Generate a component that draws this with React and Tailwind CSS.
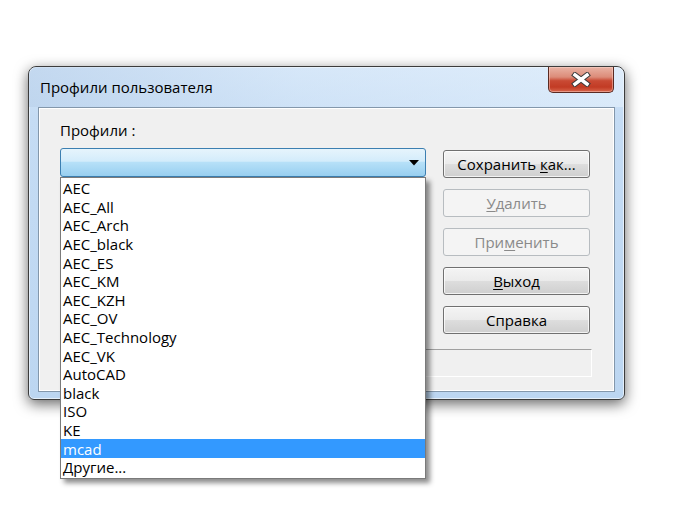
import React from "react";

const items = [
  "AEC",
  "AEC_All",
  "AEC_Arch",
  "AEC_black",
  "AEC_ES",
  "AEC_KM",
  "AEC_KZH",
  "AEC_OV",
  "AEC_Technology",
  "AEC_VK",
  "AutoCAD",
  "black",
  "ISO",
  "KE",
  "mcad",
  "Другие...",
];

function CloseButton() {
  return (
    <div className="flex h-[26px] w-[66px] items-center justify-center rounded-b-[5px] border border-t-0 border-[#5a2a22] bg-[linear-gradient(180deg,#e9b3a5_0%,#dc8c79_40%,#c94a34_55%,#c23b24_80%,#d8664c_100%)] shadow-[inset_0_0_0_1px_rgba(255,220,210,0.45)]">
      <svg width="22" height="15" viewBox="0 0 22 15">
        <path d="M5 3 L17 12 M17 3 L5 12" stroke="#3a3a3a" strokeWidth="5.5" strokeLinecap="square" fill="none" />
        <path d="M5 3 L17 12 M17 3 L5 12" stroke="#ffffff" strokeWidth="3.5" strokeLinecap="square" fill="none" />
      </svg>
    </div>
  );
}

function Btn({ children, disabled }) {
  return (
    <div
      className={
        disabled
          ? "flex h-[28px] w-[147px] items-center justify-center rounded-[3px] border border-[#b7bcc0] bg-[#f4f4f4] text-[15px] text-[#8a8a8a]"
          : "flex h-[28px] w-[147px] items-center justify-center rounded-[3px] border border-[#707070] bg-[linear-gradient(180deg,#f4f4f4_0%,#ebebeb_48%,#dddddd_52%,#cfcfcf_100%)] text-[15px] text-black shadow-[inset_0_0_0_1px_rgba(255,255,255,0.75)]"
      }
    >
      {children}
    </div>
  );
}

export default function App() {
  return (
    <div className="h-[518px] w-[685px] bg-white pl-[28px] pt-[66px] font-['Open_Sans',sans-serif]">
      <div className="relative flex h-[334px] w-[597px] flex-col rounded-b-[6px] rounded-t-[8px] border border-[#3c3c3c] bg-[linear-gradient(180deg,#d3e5f8_0%,#c5dcf4_15%,#bcd6f1_100%)] shadow-[0_4px_14px_rgba(0,0,0,0.6),inset_0_0_0_1px_rgba(255,255,255,0.6)]">
        <div className="flex h-[40px] items-start justify-between rounded-t-[8px] bg-[linear-gradient(90deg,rgba(185,208,234,0.6)_0%,rgba(220,235,250,0.35)_45%,rgba(232,243,253,0.55)_100%)] pl-[11px] pr-[10px]">
          <span className="mt-[9px] text-[15px] leading-[22px] text-black">Профили пользователя</span>
          <CloseButton />
        </div>
        <div className="mx-[9px] mb-[7px] flex-1 border border-[#8397ab] bg-[#f0f0f0] pl-[21px] pr-[22px] pt-[12px] shadow-[inset_0_0_0_1px_#ffffff]">
          <div className="text-[15px] leading-[20px] text-black">Профили :</div>
          <div className="mt-[8px] flex items-start">
            <div className="relative w-[366px]">
              <div className="flex h-[29px] items-center justify-end rounded-[3px] border border-[#3c7fb1] bg-[linear-gradient(180deg,#e6f4fc_0%,#d3ecfb_45%,#b6e0f8_50%,#98cff0_100%)] pr-[6px]">
                <svg width="10" height="6" viewBox="0 0 10 6">
                  <path d="M0 0 H10 L5 5.5 Z" fill="#000" />
                </svg>
              </div>
              <div className="absolute left-0 top-full z-10 w-[366px] border border-[#7a7a7a] bg-white py-px shadow-[4px_4px_5px_rgba(0,0,0,0.45)]">
                {items.map((it) => (
                  <div
                    key={it}
                    className={
                      it === "mcad"
                        ? "flex h-[18.6px] items-center bg-[#3399ff] pl-[2px] text-[15px] leading-[18px] text-white"
                        : "flex h-[18.6px] items-center pl-[2px] text-[15px] leading-[18px] text-black"
                    }
                  >
                    {it}
                  </div>
                ))}
              </div>
            </div>
            <div className="ml-[17px] mt-[2px] flex flex-col gap-[11px]">
              <Btn>
                <span>
                  Сохранить <span className="underline underline-offset-2">к</span>ак...
                </span>
              </Btn>
              <Btn disabled>
                <span>
                  <span className="underline underline-offset-2">У</span>далить
                </span>
              </Btn>
              <Btn disabled>
                <span>
                  При<span className="underline underline-offset-2">м</span>енить
                </span>
              </Btn>
              <Btn>
                <span>
                  <span className="underline underline-offset-2">В</span>ыход
                </span>
              </Btn>
              <Btn>
                <span>Справка</span>
              </Btn>
            </div>
          </div>
          <div className="mt-[15px] h-[28px] w-[532px] border border-b-white border-l-[#a0a0a0] border-r-white border-t-[#a0a0a0]" />
        </div>
      </div>
    </div>
  );
}
